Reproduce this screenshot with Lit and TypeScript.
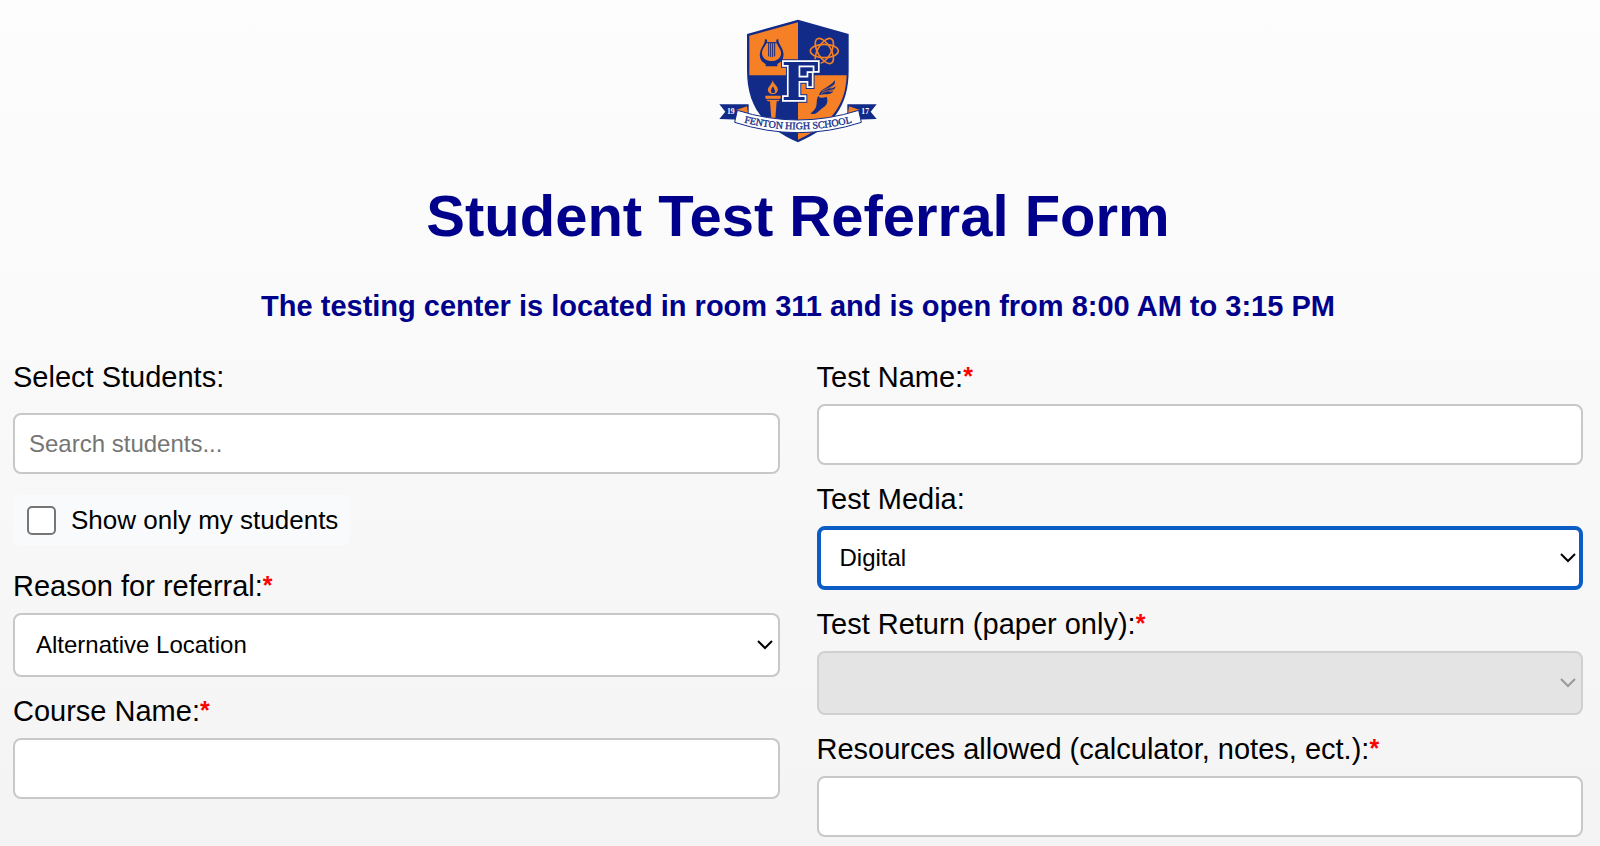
import { LitElement, html, css, svg, nothing } from "lit";
import { customElement, property } from "lit/decorators.js";

@customElement("school-crest")
class SchoolCrest extends LitElement {
  static styles = css`
    :host { display: block; line-height: 0; }
    .crest { width: 180px; height: 140px; }
    .navy { fill: #122b88; }
    .orange { fill: #f58025; }
    .atom { fill: none; stroke: #f58025; stroke-width: 5; }
    .line { fill: none; stroke: #122b88; stroke-width: 3; stroke-linecap: round; }
    .banner { fill: #fff; stroke: #122b88; stroke-width: 3; stroke-linejoin: round; }
    .name { font: 30px "Liberation Serif", serif; fill: #122b88; stroke: #122b88; stroke-width: 1; }
    .year { font: bold 23px "Liberation Serif", serif; fill: #fff; }
    .initial { font: bold 158px "DejaVu Serif", serif; fill: #122b88; stroke-linejoin: miter; }
    .halo { stroke: #122b88; stroke-width: 16; }
    .rim { stroke: #fff; stroke-width: 10; paint-order: stroke; }
  `;

  render() {
    return html`<svg class="crest" viewBox="-5 0 540 420" role="img" aria-label="Fenton High School crest">
      <path class="navy" d="M265 29 L417 72 V180 C417 290 370 350 265 397 C160 350 112 290 112 180 V72Z" />
      <path class="orange" d="M119 77 L265 37 V196 H119Z" />
      <path class="orange" d="M265 196 H411 C408 285 365 343 265 389Z" />

      <path class="navy" d="M166 87 L172 89 C174 101 162 110 158 122 C153 140 167 153 186 153 C205 153 218 140 213 122 C209 110 198 101 200 89 L206 87 C205 101 219 112 221 128 C224 146 214 157 203 162 V169 H168 V162 C155 156 148 144 151 128 C154 112 167 101 166 87Z" />
      <path class="line" d="M170 98 H202 M177 99 V138 M183 99 V140 M189 99 V140 M195 99 V138" />

      ${[0, 60, 120].map(
        (a) => svg`<ellipse class="atom" cx="344" cy="123" rx="42" ry="20" transform="rotate(${a} 344 123)" />`
      )}

      <path class="orange" d="M190 210 C188 222 208 227 204 242 C201 255 178 256 175 242 C173 232 182 230 190 210Z" />
      <path class="navy" d="M190 229 C184 238 182 243 186 249 H194 C199 243 194 238 190 229Z" />
      <path class="orange" d="M167 257 H213 V264 L207 274 H201 L197 326 H185 L181 274 H174 L167 264Z" />
      <path class="line" d="M171 268 H210" />

      <path class="navy" d="M326 258 C331 266 341 264 350 260 C356 270 353 283 344 290 C333 296 326 307 315 312 L302 311 C308 305 316 300 319 291 C323 281 319 268 326 258Z" />
      <path class="navy" d="M328 256 C332 235 356 236 376 211 C377 225 369 231 359 235 C367 236 374 233 378 229 C376 240 363 245 354 244 C362 247 368 244 371 242 C364 258 341 249 328 256Z" />
      <path d="M334 251 C345 242 358 243 370 239 M336 244 C347 237 361 235 374 224" fill="none" stroke="#f58025" stroke-width="2" />

      <text class="initial halo" x="215" y="270">F</text>
      <text class="initial rim" x="215" y="270">F</text>

      <path class="navy" d="M29 283 H117 V330 L29 327 L47 305Z M501 283 H413 V330 L501 327 L483 305Z" />
      <path class="orange" d="M79 300 L112 289 L115 311Z M451 300 L418 289 L415 311Z" />
      <path class="banner" d="M83 301 Q265 359 447 301 L455 337 Q265 399 75 337Z" />
      <path id="arc" d="M76 330 Q265 386 454 330" fill="none" />
      <text class="name" text-anchor="middle"><textPath href="#arc" startOffset="50%">FENTON HIGH SCHOOL</textPath></text>
      <text class="year" x="52" y="312">19</text>
      <text class="year" x="455" y="312">17</text>
    </svg>`;
  }
}

@customElement("form-field")
class FormField extends LitElement {
  @property() label = "";
  @property() kind = "text";
  @property() value = "";
  @property() placeholder = "";
  @property({ type: Boolean }) required = false;
  @property({ type: Boolean }) disabled = false;
  @property({ type: Boolean }) active = false;
  @property({ type: Boolean }) roomy = false;

  static styles = css`
    :host { display: block; }
    .field { display: flex; flex-direction: column; gap: 10px; }
    .roomy { gap: 19px; }
    .label { font-size: 29px; line-height: 34px; color: #000; }
    .star { color: #f00; font-size: 25px; font-weight: bold; line-height: 0; vertical-align: 2px; }
    .control {
      box-sizing: border-box; width: 100%; height: 61px; margin: 0; padding: 0 14px;
      font: 24px "Liberation Sans", Arial, sans-serif; color: #000;
      background: #fff; border: 2px solid #c8c8c8; border-radius: 8px; outline: none;
    }
    .control::placeholder { color: #757575; opacity: 1; }
    .wrap { display: grid; align-items: center; }
    .wrap > * { grid-area: 1 / 1; }
    .select { height: 64px; padding: 0 21px 2px; appearance: none; }
    .select:disabled { background: #e4e4e4; border-color: #d0d0d0; opacity: 1; }
    .active { border: 4px solid #0b5cc5; padding: 0 19px 2px; }
    .chevron {
      justify-self: end; width: 18px; height: 12px; margin-right: 6px; pointer-events: none;
      fill: none; stroke: #000; stroke-width: 2;
    }
    .muted { stroke: #999; }
  `;

  render() {
    return html`<div class="field ${this.roomy ? "roomy" : ""}">
      <label class="label" for="control">${this.label}${this.required ? html`<span class="star">*</span>` : nothing}</label>
      ${this.kind === "select"
        ? html`<div class="wrap">
            <select id="control" class="control select ${this.active ? "active" : ""}" ?disabled=${this.disabled} ?required=${this.required}>
              <option>${this.value}</option>
            </select>
            <svg class="chevron ${this.disabled ? "muted" : ""}" viewBox="0 0 18 12" aria-hidden="true"><path d="M2 2 L9 9 L16 2" /></svg>
          </div>`
        : html`<input id="control" class="control" type="text" placeholder=${this.placeholder} ?required=${this.required} />`}
    </div>`;
  }
}

@customElement("app-root")
class AppRoot extends LitElement {
  static styles = css`
    :host {
      display: block; box-sizing: border-box; min-height: 100vh; padding: 10px 17px 7px 13px;
      font-family: "Liberation Sans", Arial, sans-serif;
      background: linear-gradient(#fdfdfd, #f4f4f4);
    }
    .head { display: flex; flex-direction: column; align-items: center; text-align: center; color: #00008b; }
    .title { margin: 31px 0 0; font-size: 58px; line-height: 70px; }
    .notice { margin: 37px 0 0; font-size: 29px; line-height: 36px; }
    .columns { display: grid; grid-template-columns: 1fr 1fr; gap: 37px; margin-top: 36px; align-items: start; }
    .column { display: flex; flex-direction: column; gap: 17px; }
    .mine {
      display: flex; align-items: center; align-self: start; gap: 15px; box-sizing: border-box;
      height: 50px; margin: 4px 0 7px; padding: 0 12px 0 14px; border-radius: 6px;
      font-size: 26px; background: #f9fafc;
    }
    .tick {
      appearance: none; box-sizing: border-box; width: 29px; height: 29px; margin: 0;
      background: #fff; border: 2px solid #767676; border-radius: 5px;
    }
    .tick:checked { background: #0b5cc5; }
  `;

  render() {
    return html`
      <header class="head">
        <school-crest></school-crest>
        <h1 class="title">Student Test Referral Form</h1>
        <h2 class="notice">The testing center is located in room 311 and is open from 8:00 AM to 3:15 PM</h2>
      </header>
      <form class="columns">
        <div class="column">
          <form-field label="Select Students:" placeholder="Search students..." roomy></form-field>
          <label class="mine"><input class="tick" type="checkbox" />Show only my students</label>
          <form-field label="Reason for referral:" kind="select" value="Alternative Location" required></form-field>
          <form-field label="Course Name:" required></form-field>
        </div>
        <div class="column">
          <form-field label="Test Name:" required></form-field>
          <form-field label="Test Media:" kind="select" value="Digital" active></form-field>
          <form-field label="Test Return (paper only):" kind="select" required disabled></form-field>
          <form-field label="Resources allowed (calculator, notes, ect.):" required></form-field>
        </div>
      </form>
    `;
  }
}
